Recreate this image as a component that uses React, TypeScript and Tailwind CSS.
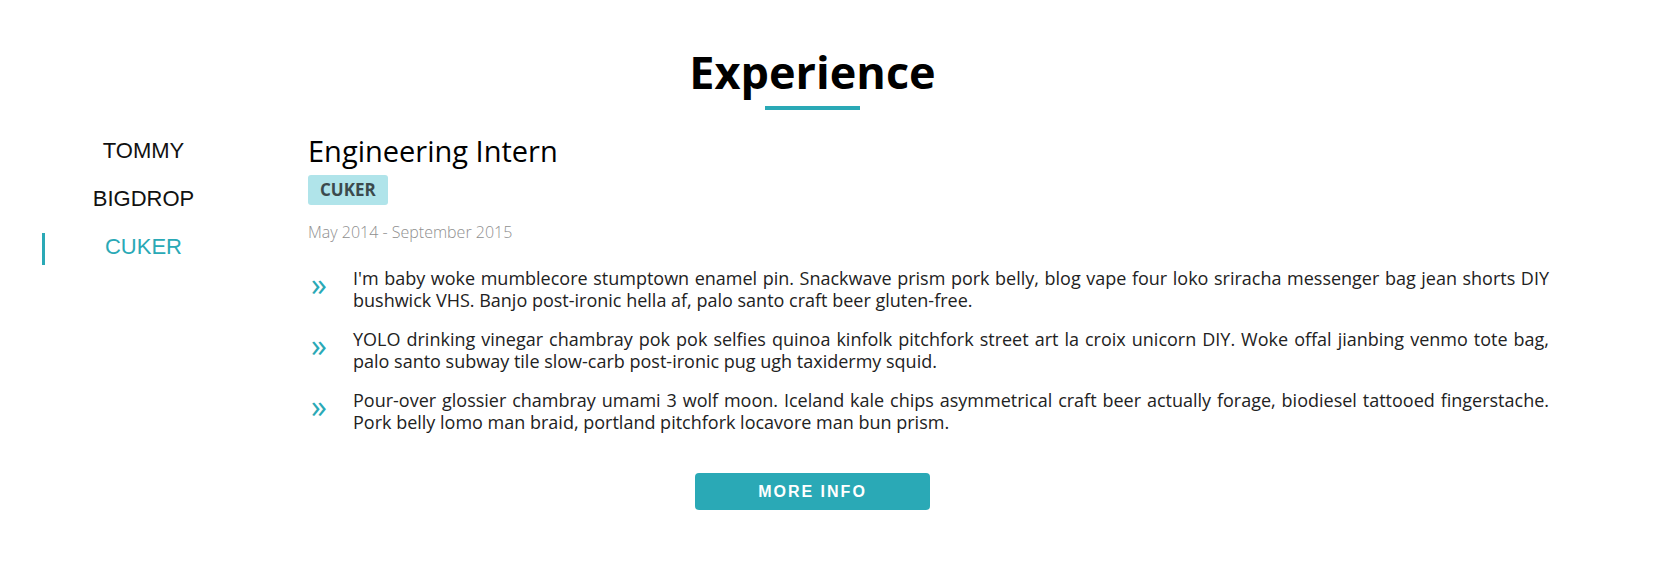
import { useState } from 'react'

const jobs = ['TOMMY', 'BIGDROP', 'CUKER']

const duties = [
  "I'm baby woke mumblecore stumptown enamel pin. Snackwave prism pork belly, blog vape four loko sriracha messenger bag jean shorts DIY bushwick VHS. Banjo post-ironic hella af, palo santo craft beer gluten-free.",
  'YOLO drinking vinegar chambray pok pok selfies quinoa kinfolk pitchfork street art la croix unicorn DIY. Woke offal jianbing venmo tote bag, palo santo subway tile slow-carb post-ironic pug ugh taxidermy squid.',
  'Pour-over glossier chambray umami 3 wolf moon. Iceland kale chips asymmetrical craft beer actually forage, biodiesel tattooed fingerstache. Pork belly lomo man braid, portland pitchfork locavore man bun prism.'
]

export default function App() {
  const [active, setActive] = useState(2)

  return (
    <main className="min-h-[581px] w-full bg-white font-['Open_Sans',sans-serif] text-[#222]">
      {/* heading */}
      <div className="flex flex-col items-center pr-[42px] pt-[47px]">
        <h2 className="text-[45px] font-bold leading-[50px] text-black">Experience</h2>
        <div className="mt-[9px] h-[4px] w-[95px] bg-[#2aa9b6]" />
      </div>

      <div className="mt-[16px] flex pl-[42px] pr-[118px]">
        <nav className="flex w-[200px] shrink-0 flex-col">
          {jobs.map((job, i) => (
            <button
              key={job}
              onClick={() => setActive(i)}
              className="flex h-[48px] items-center font-['Liberation_Sans',Arial,sans-serif] text-[22px]"
            >
              <span className={i === active ? 'mt-[6px] h-[32px] w-[3px] bg-[#2aa9b6]' : 'h-[32px] w-[3px]'} />
              <span className={i === active ? 'flex-1 text-center text-[#2aa9b6]' : 'flex-1 text-center text-[#111]'}>{job}</span>
            </button>
          ))}
        </nav>

        <article className="ml-[66px] flex-1 pt-[7px]">
          <h3 className="text-[29px] leading-[36px] text-black">Engineering Intern</h3>
          <span className="mt-[6px] inline-block rounded-[3px] bg-[#b0e4ea] px-[12px] text-[17px] font-bold leading-[30px] text-[#3b4a4d]">
            {jobs[active]}
          </span>
          <p className="mt-[15px] text-[16px] font-light leading-[24px] text-[#8f8f8f]">May 2014 - September 2015</p>

          <ul className="mt-[23px] flex flex-col gap-[17px]">
            {duties.map((d) => (
              <li key={d} className="flex">
                <span className="mt-[1px] w-[45px] shrink-0 pl-[3px] text-[32px] leading-none text-[#2aa9b6]">»</span>
                <p className="flex-1 text-justify text-[18px] leading-[22px]">{d}</p>
              </li>
            ))}
          </ul>
        </article>
      </div>

      <div className="mt-[40px] flex justify-center pr-[42px] pb-[70px]">
        <button className="h-[37px] w-[235px] rounded-[4px] bg-[#2aa9b6] font-['Liberation_Sans',Arial,sans-serif] text-[16px] font-bold tracking-[2px] text-white">
          MORE INFO
        </button>
      </div>
    </main>
  )
}
